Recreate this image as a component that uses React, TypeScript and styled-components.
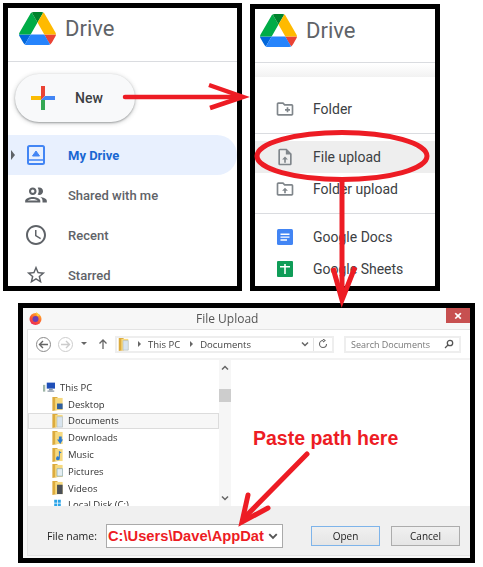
import React from 'react';
import styled, { createGlobalStyle, css } from 'styled-components';

const Global = createGlobalStyle`
  html, body {
    margin: 0;
    background: #fff;
  }
  * {
    box-sizing: border-box;
  }
`;

const soft = css`
  filter: blur(0.3px);
`;

const Page = styled.div`
  position: relative;
  width: 483px;
  height: 567px;
  overflow: hidden;
  font-family: Roboto, 'Liberation Sans', sans-serif;
`;

const TopRow = styled.div`
  display: flex;
  align-items: flex-start;
  gap: 8px;
  padding: 3px 0 0 3px;
`;

const Panel = styled.section<{ $w: number; $h: number; $mt?: number }>`
  width: ${(p) => p.$w}px;
  height: ${(p) => p.$h}px;
  margin-top: ${(p) => p.$mt ?? 0}px;
  border: 5px solid #000;
  background: #fff;
  overflow: hidden;
`;

/* --- drive header --- */

const Header = styled.header<{ $h: number; $top: number; $left: number }>`
  display: flex;
  align-items: flex-start;
  gap: 9px;
  height: ${(p) => p.$h + 1}px;
  padding: ${(p) => p.$top}px 0 0 ${(p) => p.$left}px;
  border-bottom: 1px solid #dadce0;
`;

const Brand = styled.span`
  font-size: 22px;
  line-height: 33px;
  color: #5f6368;
`;

const NewButton = styled.div`
  display: flex;
  align-items: center;
  gap: 20px;
  width: 120px;
  height: 48px;
  margin: 12px 0 13px 7px;
  padding-left: 16px;
  border-radius: 24px;
  background: #f8f9fa;
  box-shadow: 0 1px 2px rgba(60, 64, 67, 0.4), 0 1px 4px 1px rgba(60, 64, 67, 0.18);
  font-size: 14px;
  font-weight: 500;
  color: #3c4043;
`;

const NavRow = styled.div<{ $active?: boolean }>`
  display: flex;
  align-items: center;
  height: 40px;
  border-radius: 0 20px 20px 0;
  background: ${(p) => (p.$active ? '#e8f0fe' : 'transparent')};
  font-size: 13px;
  font-weight: ${(p) => (p.$active ? 700 : 500)};
  color: ${(p) => (p.$active ? '#1967d2' : '#5f6368')};
`;

const CaretSlot = styled.span`
  display: flex;
  width: 8px;
  justify-content: flex-end;
`;

const Caret = styled.i`
  width: 0;
  height: 0;
  margin-right: 1px;
  border-style: solid;
  border-width: 5px 0 5px 4px;
  border-color: transparent transparent transparent #5f6368;
`;

const IconSlot = styled.span`
  display: flex;
  align-items: center;
  justify-content: center;
  width: 40px;
  margin-right: 12px;
`;

/* --- new menu --- */

const MenuShade = styled.div`
  height: 13px;
  margin-top: 1px;
  background: linear-gradient(#fff, #f2f2f2);
`;

const Menu = styled.div`
  padding-top: 16px;
`;

const MenuRow = styled.div<{ $hover?: boolean }>`
  display: flex;
  align-items: center;
  height: 32px;
  padding-left: 20px;
  background: ${(p) => (p.$hover ? '#eeeeee' : 'transparent')};
  font-size: 14px;
  color: #3c4043;
`;

const MenuIcon = styled.span`
  display: flex;
  justify-content: center;
  width: 20px;
  margin-right: 18px;
`;

const MenuLine = styled.hr`
  height: 1px;
  margin: 8px 0 7px;
  border: 0;
  background: #dadce0;
`;

/* --- windows dialog --- */

const Dialog = styled(Panel)`
  display: flex;
  flex-direction: column;
  margin: 12px 0 0 18px;
  background: #f7f7f7;
  font-family: 'Open Sans', 'Noto Sans', sans-serif;
  color: #333;
`;

const TitleBar = styled.div`
  display: flex;
  flex: none;
  align-items: flex-start;
  height: 21px;
  padding-left: 6px;
`;

const FoxWrap = styled.span`
  display: flex;
  margin-top: 4px;
  ${soft}
`;

const Title = styled.span`
  margin-left: 154px;
  font-size: 12px;
  line-height: 21px;
  color: #555;
  ${soft}
`;

const CloseBox = styled.span`
  display: flex;
  align-items: center;
  justify-content: center;
  width: 24px;
  height: 15px;
  margin-left: auto;
  background: #c75050;
  color: #fff;
  font-size: 15px;
  font-weight: 700;
  line-height: 15px;
  ${soft}
`;

const Body = styled.div`
  display: flex;
  flex: 1;
  flex-direction: column;
  min-height: 0;
  margin: 0 0 2px 4px;
  border-top: 1px solid #e4e4e4;
  border-left: 1px solid #e4e4e4;
  border-bottom: 1px solid #e4e4e4;
  background: #fff;
`;

const Toolbar = styled.div`
  display: flex;
  flex: none;
  align-items: center;
  height: 30px;
  padding-left: 8px;
  border-bottom: 2px solid #f3f3f3;
  font-size: 9.5px;
  ${soft}
`;

const RoundBtn = styled.span<{ $off?: boolean }>`
  display: flex;
  align-items: center;
  justify-content: center;
  width: 15px;
  height: 15px;
  margin-right: 7px;
  border: 1px solid ${(p) => (p.$off ? '#ccc' : '#8a8a8a')};
  border-radius: 50%;
`;

const UpArrow = styled.svg`
  margin-left: 9px;
`;

const Crumbs = styled.div`
  display: flex;
  align-items: center;
  width: 219px;
  height: 17px;
  margin-left: 6px;
  padding-left: 1px;
  border: 2px solid #eee;
  color: #444;
`;

const CrumbFolder = styled.span`
  display: flex;
  margin-right: 7px;
`;

const CrumbText = styled.span`
  margin: 0 8px 0 6px;
`;

const CrumbEnd = styled.span`
  display: flex;
  align-items: center;
  gap: 4px;
  margin-left: auto;
  height: 100%;
`;

const CrumbCell = styled.span`
  display: flex;
  align-items: center;
  justify-content: center;
  width: 19px;
  height: 100%;
  border-left: 1px solid #e2e2e2;
`;

const SearchBox = styled.div`
  display: flex;
  align-items: center;
  justify-content: space-between;
  width: 117px;
  height: 17px;
  margin-left: 10px;
  padding: 0 5px;
  border: 2px solid #eee;
  font-size: 9px;
  color: #777;
`;

const Panes = styled.div`
  display: flex;
  flex: 1;
  min-height: 0;
`;

const Tree = styled.div`
  flex: none;
  width: 191px;
  padding-top: 19px;
  overflow: hidden;
  font-size: 9.5px;
  color: #333;
  ${soft}
`;

const TreeRow = styled.div<{ $selected?: boolean; $indent: number }>`
  display: flex;
  align-items: center;
  gap: 5px;
  height: 16.8px;
  padding-left: ${(p) => p.$indent}px;
  border: 1px solid ${(p) => (p.$selected ? '#dcdcdc' : 'transparent')};
  background: ${(p) => (p.$selected ? '#f7f7f7' : 'transparent')};
  white-space: nowrap;
`;

const TreeIcon = styled.span<{ $w: number }>`
  display: flex;
  flex: none;
  justify-content: center;
  width: ${(p) => p.$w}px;
`;

const Scrollbar = styled.div`
  display: flex;
  flex: none;
  flex-direction: column;
  align-items: center;
  justify-content: space-between;
  width: 12px;
  padding: 4px 0;
  background: #f6f6f6;
  ${soft}
`;

const Thumb = styled.span`
  width: 12px;
  height: 13px;
  margin-bottom: 76px;
  background: #cdcdcd;
`;

const Files = styled.div`
  flex: 1;
  padding: 68px 0 0 22px;
`;

const Hint = styled.div`
  font-family: 'Liberation Sans', Arial, sans-serif;
  font-size: 19.5px;
  font-weight: 700;
  line-height: 20px;
  color: #ed1c24;
  white-space: nowrap;
`;

const Footer = styled.div`
  display: flex;
  flex: none;
  align-items: center;
  height: 49px;
  padding: 11px 0 0 19px;
  background: #f0f0f0;
`;

const FieldLabel = styled.label`
  width: 59px;
  font-size: 10.5px;
  color: #222;
  ${soft}
`;

const NameField = styled.div`
  display: flex;
  align-items: center;
  justify-content: space-between;
  width: 177px;
  height: 24px;
  padding: 0 4px 0 1px;
  border: 1px solid #aaa;
  background: #fff;
  font-family: 'Liberation Sans', Arial, sans-serif;
  font-size: 14.7px;
  font-weight: 700;
  color: #ed1c24;
  white-space: nowrap;
`;

const DialogBtn = styled.span<{ $primary?: boolean }>`
  display: flex;
  align-items: center;
  justify-content: center;
  width: 69px;
  height: 20px;
  margin-left: ${(p) => (p.$primary ? 28 : 11)}px;
  border: 1px solid ${(p) => (p.$primary ? '#7eb4ea' : '#acacac')};
  background: linear-gradient(#f0f0f0, #e5e5e5);
  font-size: 10px;
  color: #222;
  ${soft}
`;

const Annotations = styled.svg`
  position: absolute;
  top: 0;
  left: 0;
  pointer-events: none;
`;

/* --- drawings --- */

const DriveLogo = () => (
  <svg width="37" height="33" viewBox="0 0 87.3 78">
    <path d="m6.6 66.85 3.85 6.65c.8 1.4 1.95 2.5 3.3 3.3l13.75-23.8h-27.5c0 1.55.4 3.1 1.2 4.5z" fill="#0066da" />
    <path d="m43.65 25-13.75-23.8c-1.35.8-2.5 1.9-3.3 3.3l-25.4 44a9.06 9.06 0 0 0 -1.2 4.5h27.5z" fill="#00ac47" />
    <path d="m73.55 76.8c1.35-.8 2.5-1.9 3.3-3.3l1.6-2.75 7.65-13.25c.8-1.4 1.2-2.95 1.2-4.5h-27.502l5.852 11.5z" fill="#ea4335" />
    <path d="m43.65 25 13.75-23.8c-1.35-.8-2.9-1.2-4.5-1.2h-18.5c-1.6 0-3.15.45-4.5 1.2z" fill="#00832d" />
    <path d="m59.8 53h-32.3l-13.75 23.8c1.35.8 2.9 1.2 4.5 1.2h50.8c1.6 0 3.15-.45 4.5-1.2z" fill="#2684fc" />
    <path d="m73.4 26.5-12.7-22c-.8-1.4-1.95-2.5-3.3-3.3l-13.75 23.8 16.15 28h27.45c0-1.55-.4-3.1-1.2-4.5z" fill="#ffba00" />
  </svg>
);

const PlusIcon = () => (
  <svg width="24" height="24" viewBox="0 0 24 24">
    <path d="M10 0h4v10h-4z" fill="#ea4335" />
    <path d="M14 10h10v4H14z" fill="#4285f4" />
    <path d="M10 14h4v10h-4z" fill="#34a853" />
    <path d="M0 10h10v4H0z" fill="#fbbc04" />
    <path d="M10 10h4l-4 4z" fill="#ea4335" />
    <path d="M14 10v4h-4z" fill="#4285f4" />
  </svg>
);

const Mat = ({ d, size = 24, fill = '#5f6368' }: { d: string; size?: number; fill?: string }) => (
  <svg width={size} height={size} viewBox="0 0 24 24" fill={fill}>
    <path d={d} />
  </svg>
);

const PEOPLE =
  'M9 13.75c-2.34 0-7 1.17-7 3.5V19h14v-1.75c0-2.33-4.66-3.5-7-3.5zM4.34 17c.84-.58 2.87-1.25 4.66-1.25s3.82.67 4.66 1.25H4.34zM9 12c1.93 0 3.5-1.57 3.5-3.5S10.93 5 9 5 5.5 6.57 5.5 8.5 7.07 12 9 12zm0-5c.83 0 1.5.67 1.5 1.5S9.83 10 9 10s-1.5-.67-1.5-1.5S8.17 7 9 7zm7.04 6.81c1.16.84 1.96 1.96 1.96 3.44V19h4v-1.75c0-2.02-3.5-3.17-5.96-3.44zM15 12c1.93 0 3.5-1.57 3.5-3.5S16.93 5 15 5c-.54 0-1.04.13-1.5.35.63.89 1 1.98 1 3.15s-.37 2.26-1 3.15c.46.22.96.35 1.5.35z';
const CLOCK =
  'M11.99 2C6.47 2 2 6.48 2 12s4.47 10 9.99 10C17.52 22 22 17.52 22 12S17.52 2 11.99 2zM12 20c-4.42 0-8-3.58-8-8s3.58-8 8-8 8 3.58 8 8-3.58 8-8 8zm.5-13H11v6l5.25 3.15.75-1.23-4.5-2.67z';
const STAR =
  'M22 9.24l-7.19-.62L12 2 9.19 8.63 2 9.24l5.46 4.73L5.82 21 12 17.27 18.18 21l-1.63-7.03L22 9.24zM12 15.4l-3.76 2.27 1-4.28-3.32-2.88 4.38-.38L12 6.1l1.71 4.04 4.38.38-3.32 2.88 1 4.28L12 15.4z';
const NEW_FOLDER =
  'M20 6h-8l-2-2H4c-1.11 0-1.99.89-1.99 2L2 18c0 1.11.89 2 2 2h16c1.11 0 2-.89 2-2V8c0-1.11-.89-2-2-2zm0 12H4V6h5.17l2 2H20v10zm-8-4h2v2h2v-2h2v-2h-2v-2h-2v2h-2v2z';
const UP_FILE =
  'M14 2H6c-1.1 0-2 .9-2 2v16c0 1.1.9 2 2 2h12c1.1 0 2-.9 2-2V8l-6-6zm4 18H6V4h7v5h5v11zm-5-1v-4h2.5L12 11.5 8.5 15H11v4z';
const UP_FOLDER =
  'M20 6h-8l-2-2H4c-1.1 0-2 .9-2 2v12c0 1.1.9 2 2 2h16c1.1 0 2-.9 2-2V8c0-1.1-.9-2-2-2zm0 12H4V6h5.17l2 2H20v10zm-7-1v-3h2.5L12 10.5 8.5 14H11v3z';

const MyDriveIcon = () => (
  <svg width="18" height="20" viewBox="0 0 18 20">
    <rect x="1" y="1" width="16" height="18" rx="1.5" fill="none" stroke="#4285f4" strokeWidth="2" />
    <path d="M1 15h16" stroke="#4285f4" strokeWidth="1.5" />
    <path d="M5.5 11l3.5-5 3.5 5z" fill="#4285f4" stroke="#4285f4" strokeLinejoin="round" />
  </svg>
);

const DocsIcon = () => (
  <svg width="16" height="16" viewBox="0 0 16 16">
    <rect width="16" height="16" rx="1.5" fill="#4285f4" />
    <path d="M3.5 4.5h9v1.4h-9zM3.5 7.4h9v1.4h-9zM3.5 10.3h6.5v1.4H3.5z" fill="#fff" />
  </svg>
);

const SheetsIcon = () => (
  <svg width="16" height="16" viewBox="0 0 16 16">
    <rect width="16" height="16" rx="1" fill="#0f9d58" />
    <path d="M3 5h4.2V3h1.6v2H13v1.5H8.8V13H7.2V6.5H3z" fill="#fff" />
  </svg>
);

const FirefoxIcon = () => (
  <svg width="13" height="13" viewBox="0 0 13 13">
    <defs>
      <linearGradient id="fox" x1="0.8" y1="0" x2="0.2" y2="1">
        <stop offset="0" stopColor="#ffb52e" />
        <stop offset="0.55" stopColor="#ff5a2c" />
        <stop offset="1" stopColor="#e8225f" />
      </linearGradient>
    </defs>
    <circle cx="6.5" cy="7" r="6" fill="url(#fox)" />
    <circle cx="6.5" cy="7" r="3" fill="#6a3fb5" />
    <path d="M7 0c2 1.2 3 2.5 3.5 4L8 4z" fill="#ffca3a" />
  </svg>
);

const Chevron = ({ dir = 'down', color = '#666', size = 8 }: { dir?: 'down' | 'up'; color?: string; size?: number }) => (
  <svg width={size} height={size} viewBox="0 0 8 8">
    <path d={dir === 'down' ? 'M1 2.5l3 3 3-3' : 'M1 5.5l3-3 3 3'} fill="none" stroke={color} strokeWidth="1.5" />
  </svg>
);

const Tiny = ({ d, color = '#666', w = 8 }: { d: string; color?: string; w?: number }) => (
  <svg width={w} height="10" viewBox={`0 0 ${w} 10`} fill={color}>
    <path d={d} />
  </svg>
);

const ArrowGlyph = ({ left, color }: { left?: boolean; color: string }) => (
  <svg width="11" height="9" viewBox="0 0 11 9" fill="none" stroke={color} strokeWidth="1.4">
    <path d={left ? 'M10 4.5H2M5 1L1.5 4.5 5 8' : 'M1 4.5h8M6 1l3.5 3.5L6 8'} />
  </svg>
);

const folderAccents: Record<string, React.ReactNode> = {
  desktop: <path d="M5 7h6v6H5z" fill="#2f5f9e" />,
  documents: <path d="M5 3h6v11H5z" fill="#d8e4ee" stroke="#a8b6c2" strokeWidth="0.6" />,
  downloads: <path d="M7 6h3v3h1.5L8.5 14 5 9h2z" fill="#2b7bd1" />,
  music: <path d="M7 3l3 2-2 .6V11a2 2 0 1 1-1-1.7z" fill="#2b7bd1" />,
  pictures: <path d="M5 5h6v8H5z" fill="#e4eef2" stroke="#7fa6b5" strokeWidth="0.7" />,
  videos: <path d="M5 4h6v10H5z" fill="#4a4f55" />,
};

const FolderIcon = ({ kind, w = 11, h = 14 }: { kind: string; w?: number; h?: number }) => (
  <svg width={w} height={h} viewBox="0 0 11 15">
    <path d="M0 0h5l1 1v13l-6 1z" fill="#dcab3e" />
    <path d="M3 1h8v13H3z" fill="#f6d97f" />
    {folderAccents[kind]}
  </svg>
);

const PcIcon = () => (
  <svg width="16" height="13" viewBox="0 0 16 13">
    <rect x="5" y="0" width="11" height="8" fill="#1f4fb8" />
    <path d="M8 8h5v2H8zM6 10.5h9V12H6z" fill="#8a98a8" />
    <rect x="0" y="3" width="3" height="9" fill="#9fb6a8" />
  </svg>
);

const DiskIcon = () => (
  <svg width="15" height="13" viewBox="0 0 15 13">
    <path d="M3 0h4v4H3zM8 0h4v4H8zM3 5h4v4H3zM8 5h4v4H8z" fill="#2aa4e8" />
    <path d="M0 10h15v3H0z" fill="#a8b0b8" />
  </svg>
);

/* --- data --- */

const navRows = [
  { label: 'Shared with me', icon: <Mat d={PEOPLE} size={26} /> },
  { label: 'Recent', icon: <Mat d={CLOCK} /> },
  { label: 'Starred', icon: <Mat d={STAR} size={22} /> },
];

const treeFolders = ['Desktop', 'Documents', 'Downloads', 'Music', 'Pictures', 'Videos'];

const DriveHeader = ({ h, top, left }: { h: number; top: number; left: number }) => (
  <Header $h={h} $top={top} $left={left}>
    <DriveLogo />
    <Brand>Drive</Brand>
  </Header>
);

const App = () => (
  <Page>
    <Global />
    <TopRow>
      <Panel $w={239} $h={288}>
        <DriveHeader h={53} top={4} left={11} />
        <NewButton>
          <PlusIcon />
          New
        </NewButton>
        <NavRow $active>
          <CaretSlot>
            <Caret />
          </CaretSlot>
          <IconSlot>
            <MyDriveIcon />
          </IconSlot>
          My Drive
        </NavRow>
        {navRows.map((row) => (
          <NavRow key={row.label}>
            <CaretSlot />
            <IconSlot>{row.icon}</IconSlot>
            {row.label}
          </NavRow>
        ))}
      </Panel>

      <Panel $w={190} $h={287} $mt={1}>
        <DriveHeader h={53} top={5} left={5} />
        <MenuShade />
        <Menu>
          <MenuRow>
            <MenuIcon>
              <Mat d={NEW_FOLDER} fill="#80868b" />
            </MenuIcon>
            Folder
          </MenuRow>
          <MenuLine />
          <MenuRow $hover>
            <MenuIcon>
              <Mat d={UP_FILE} fill="#80868b" />
            </MenuIcon>
            File upload
          </MenuRow>
          <MenuRow>
            <MenuIcon>
              <Mat d={UP_FOLDER} fill="#80868b" />
            </MenuIcon>
            Folder upload
          </MenuRow>
          <MenuLine />
          <MenuRow>
            <MenuIcon>
              <DocsIcon />
            </MenuIcon>
            Google Docs
          </MenuRow>
          <MenuRow>
            <MenuIcon>
              <SheetsIcon />
            </MenuIcon>
            Google Sheets
          </MenuRow>
        </Menu>
      </Panel>
    </TopRow>

    <Dialog $w={457} $h={260}>
      <TitleBar>
        <FoxWrap>
          <FirefoxIcon />
        </FoxWrap>
        <Title>File Upload</Title>
        <CloseBox>×</CloseBox>
      </TitleBar>
      <Body>
        <Toolbar>
          <RoundBtn>
            <ArrowGlyph left color="#666" />
          </RoundBtn>
          <RoundBtn $off>
            <ArrowGlyph color="#ccc" />
          </RoundBtn>
          <Tiny d="M1 3h6L4 6z" w={8} />
          <UpArrow width="12" height="12" viewBox="0 0 12 12" fill="none" stroke="#666" strokeWidth="1.3">
            <path d="M6 11V2M2.5 5.5L6 2l3.5 3.5" />
          </UpArrow>
          <Crumbs>
            <CrumbFolder>
              <FolderIcon kind="documents" w={11} h={13} />
            </CrumbFolder>
            <Tiny d="M2 2l3 3-3 3z" w={6} />
            <CrumbText>This PC</CrumbText>
            <Tiny d="M2 2l3 3-3 3z" w={6} />
            <CrumbText>Documents</CrumbText>
            <CrumbEnd>
              <Chevron />
              <CrumbCell>
                <svg width="10" height="10" viewBox="0 0 10 10" fill="none" stroke="#666" strokeWidth="1.1">
                  <path d="M8.5 5A3.5 3.5 0 1 1 5 1.5M5 0l2 1.5L5 3" />
                </svg>
              </CrumbCell>
            </CrumbEnd>
          </Crumbs>
          <SearchBox>
            Search Documents
            <svg width="10" height="10" viewBox="0 0 10 10" fill="none" stroke="#555" strokeWidth="1.3">
              <circle cx="6" cy="4" r="2.7" />
              <path d="M4 6L1 9" />
            </svg>
          </SearchBox>
        </Toolbar>
        <Panes>
          <Tree>
            <TreeRow $indent={14}>
              <TreeIcon $w={12}>
                <PcIcon />
              </TreeIcon>
              This PC
            </TreeRow>
            {treeFolders.map((name) => (
              <TreeRow key={name} $indent={23} $selected={name === 'Documents'}>
                <TreeIcon $w={11}>
                  <FolderIcon kind={name.toLowerCase()} />
                </TreeIcon>
                {name}
              </TreeRow>
            ))}
            <TreeRow $indent={23}>
              <TreeIcon $w={11}>
                <DiskIcon />
              </TreeIcon>
              Local Disk (C:)
            </TreeRow>
          </Tree>
          <Scrollbar>
            <Chevron dir="up" />
            <Thumb />
            <Chevron />
          </Scrollbar>
          <Files>
            <Hint>Paste path here</Hint>
          </Files>
        </Panes>
        <Footer>
          <FieldLabel>File name:</FieldLabel>
          <NameField>
            C:\Users\Dave\AppDat
            <Chevron color="#555" size={10} />
          </NameField>
          <DialogBtn $primary>Open</DialogBtn>
          <DialogBtn>Cancel</DialogBtn>
        </Footer>
      </Body>
    </Dialog>

    <Annotations width="483" height="567" fill="none" stroke="#ed1c24">
      <path d="M125 97H240" strokeWidth="4.5" strokeLinecap="round" />
      <path d="M209 85L243 97L210 108" strokeWidth="4.5" />
      <ellipse cx="342" cy="156" rx="85" ry="23.5" strokeWidth="5" />
      <path d="M342 180V298" strokeWidth="5" />
      <path d="M333 268L342 300L355 267" strokeWidth="5" />
      <path d="M307 454L246 516" strokeWidth="5" strokeLinecap="round" />
      <path d="M248 495L242 522L268 508" strokeWidth="5" strokeLinecap="round" />
    </Annotations>
  </Page>
);

export default App;
